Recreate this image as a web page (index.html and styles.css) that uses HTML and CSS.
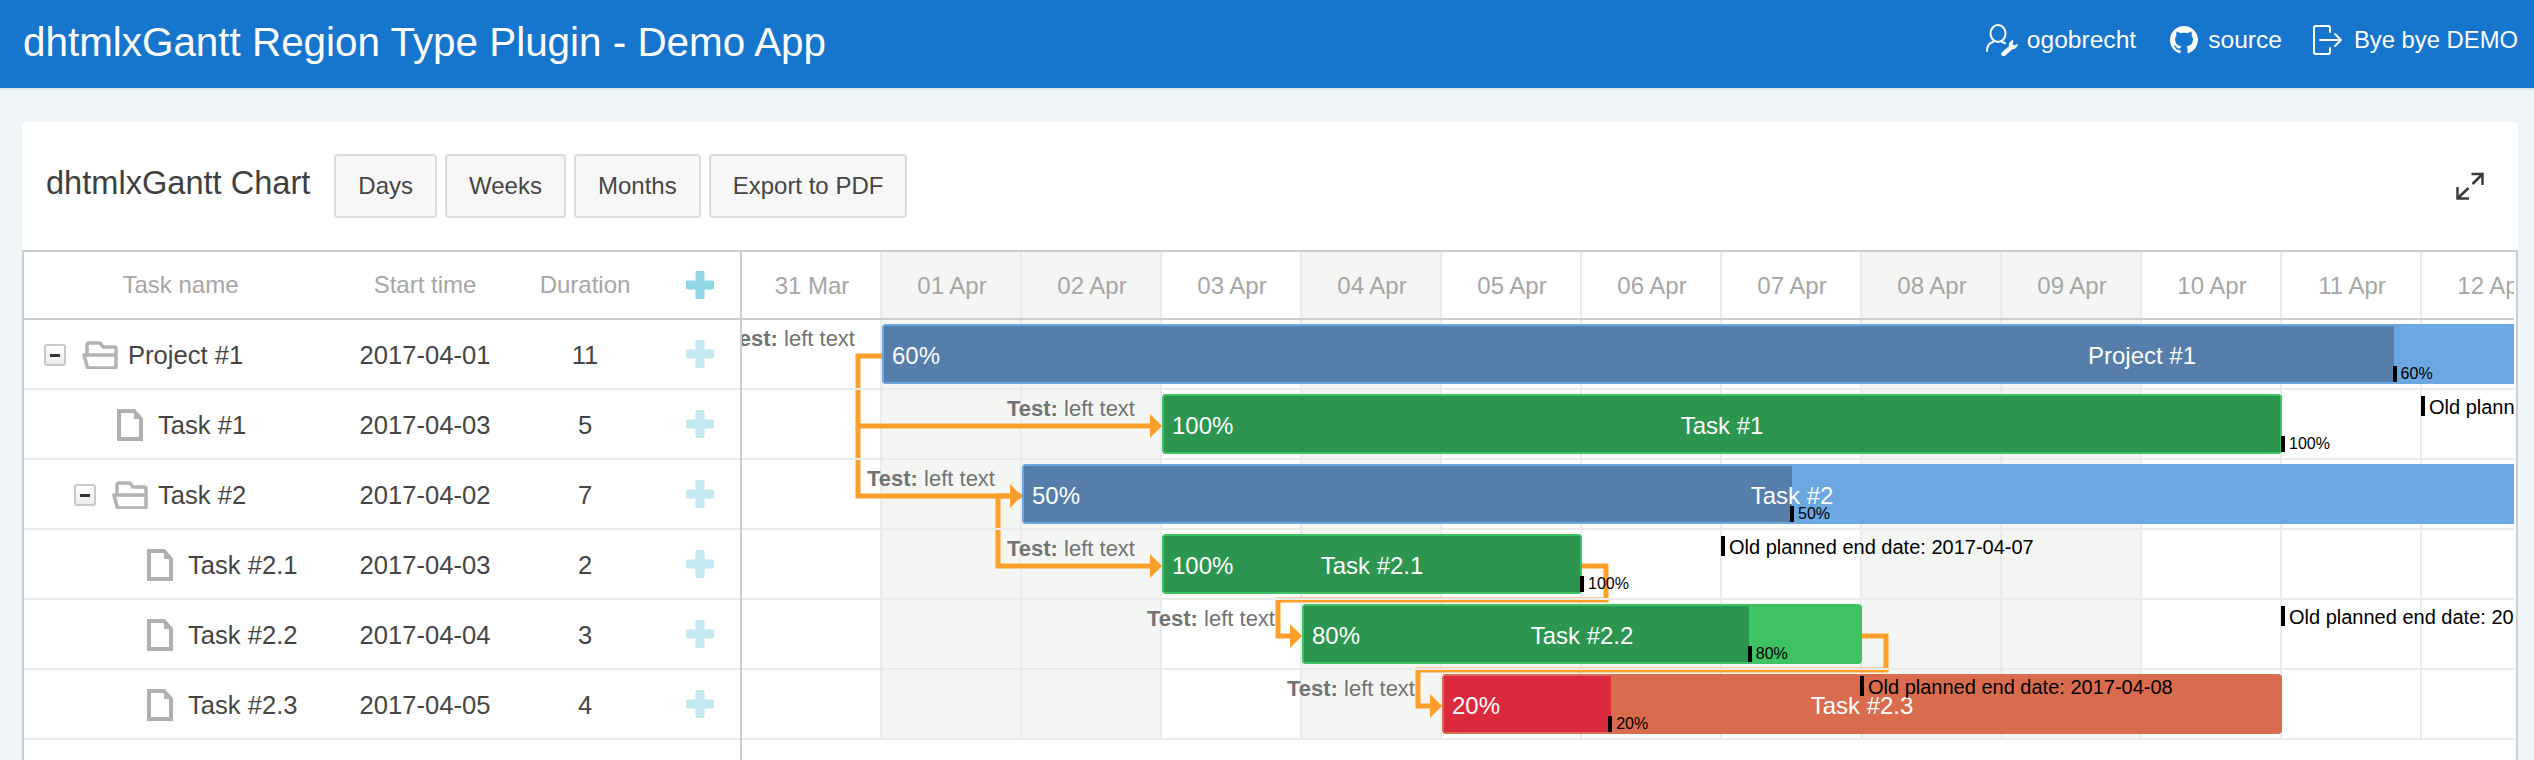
FILE: index.html
```html
<!DOCTYPE html>
<html lang="en">
<head>
  <meta charset="UTF-8">
  <meta name="viewport" content="width=device-width, initial-scale=1.0">
  <title>dhtmlxGantt Region Type Plugin - Demo App</title>

  <link rel="stylesheet" href="styles.css">
</head>
<body>

  <header class="topbar">
    <h1 class="app-title">dhtmlxGantt Region Type Plugin - Demo App</h1>
    <nav class="top-nav">
      <a class="nav-item nav-user">
        <svg class="icon-user" viewBox="0 0 32 32" fill="none" stroke="#fff" stroke-width="2" stroke-linecap="round">
          <ellipse cx="12" cy="9.500" rx="7.500" ry="8.500"/>
          <path d="M1 27c0-5 2-8 6-9M16 18c1 .3 2 .6 3 1.200"/>
          <path d="M17.500 30l8-7" stroke-width="4.500"/>
          <path d="M23.500 22c-.8-2.500.5-4.500 3.500-5.500l-1 3.500 2 2 3.500-1.500c-.5 3-3.500 5-6 4z" fill="#fff" stroke-width="1"/>
        </svg>
        ogobrecht
      </a>
      <a class="nav-item nav-source">
        <svg class="icon-github" viewBox="0 0 16 16" fill="#fff">
          <path d="M8 0C3.58 0 0 3.58 0 8c0 3.54 2.29 6.53 5.47 7.59.4.07.55-.17.55-.38 0-.19-.01-.82-.01-1.49-2.01.37-2.53-.49-2.69-.94-.09-.23-.48-.94-.82-1.13-.28-.15-.68-.52-.01-.53.63-.01 1.08.58 1.23.82.72 1.21 1.87.87 2.33.66.07-.52.28-.87.51-1.07-1.78-.2-3.64-.89-3.64-3.95 0-.87.31-1.59.82-2.15-.08-.2-.36-1.02.08-2.12 0 0 .67-.21 2.2.82.64-.18 1.32-.27 2-.27.68 0 1.36.09 2 .27 1.53-1.04 2.2-.82 2.2-.82.44 1.1.16 1.92.08 2.12.51.56.82 1.27.82 2.15 0 3.07-1.87 3.75-3.65 3.95.29.25.54.73.54 1.48 0 1.07-.01 1.93-.01 2.2 0 .21.15.46.55.38A8.013 8.013 0 0016 8c0-4.42-3.58-8-8-8z"/>
        </svg>
        source
      </a>
      <a class="nav-item nav-logout">
        <svg class="icon-logout" viewBox="0 0 29 30" fill="none" stroke="#fff" stroke-width="2" stroke-linecap="round" stroke-linejoin="round">
          <path d="M17 7V3a2 2 0 0 0-2-2H3a2 2 0 0 0-2 2v24a2 2 0 0 0 2 2h12a2 2 0 0 0 2-2v-4"/>
          <path d="M7 15h21M22 9l6 6-6 6"/>
        </svg>
        Bye bye DEMO
      </a>
    </nav>
  </header>

  <main class="content">
    <section class="card">
      <div class="toolbar">
        <h2 class="chart-title">dhtmlxGantt Chart</h2>
        <button class="btn">Days</button>
        <button class="btn">Weeks</button>
        <button class="btn">Months</button>
        <button class="btn">Export to PDF</button>
        <svg class="icon-expand" viewBox="0 0 28 28" fill="none" stroke="#3c3c3c" stroke-width="2.500">
          <path d="M15.500 2H26.500V13M26 2.500L16.500 12"/>
          <path d="M1.500 15V26.500H13M2 26L12.500 16"/>
        </svg>
      </div>

      <div class="gantt">
        <!-- left side: the task tree -->
        <div class="grid">
          <div class="grid-head">
            <div class="col-name">Task name</div>
            <div class="col-start">Start time</div>
            <div class="col-dur">Duration</div>
            <div class="col-add">
              <svg class="icon-plus" viewBox="0 0 28 28"><path d="M14 2v24M2 14h24"/></svg>
            </div>
          </div>

          <div class="grid-row">
            <div class="col-name tree">
              <span class="toggle"></span>
              <span class="tree-icon">
                <svg class="icon-folder" viewBox="0 0 36 28" fill="none">
                  <path d="M5 13V4a2 2 0 0 1 2-2h11l3 4h11a2 2 0 0 1 2 2v18a1 1 0 0 1-1 1H7a2 2 0 0 1-2-2L2 14h32"/>
                </svg>
              </span>
              <span class="task-name">Project #1</span>
            </div>
            <div class="col-start">2017-04-01</div>
            <div class="col-dur">11</div>
            <div class="col-add"><svg class="icon-plus" viewBox="0 0 28 28"><path d="M14 2v24M2 14h24"/></svg></div>
          </div>

          <div class="grid-row">
            <div class="col-name tree">
              <span class="indent"></span>
              <span class="toggle-space"></span>
              <span class="tree-icon">
                <svg class="icon-doc" viewBox="0 0 26 32" fill="none">
                  <path d="M2 2h15l7 8v20H2z"/><path class="doc-fold" d="M17 2l7 8h-7z"/>
                </svg>
              </span>
              <span class="task-name">Task #1</span>
            </div>
            <div class="col-start">2017-04-03</div>
            <div class="col-dur">5</div>
            <div class="col-add"><svg class="icon-plus" viewBox="0 0 28 28"><path d="M14 2v24M2 14h24"/></svg></div>
          </div>

          <div class="grid-row">
            <div class="col-name tree">
              <span class="indent"></span>
              <span class="toggle"></span>
              <span class="tree-icon">
                <svg class="icon-folder" viewBox="0 0 36 28" fill="none">
                  <path d="M5 13V4a2 2 0 0 1 2-2h11l3 4h11a2 2 0 0 1 2 2v18a1 1 0 0 1-1 1H7a2 2 0 0 1-2-2L2 14h32"/>
                </svg>
              </span>
              <span class="task-name">Task #2</span>
            </div>
            <div class="col-start">2017-04-02</div>
            <div class="col-dur">7</div>
            <div class="col-add"><svg class="icon-plus" viewBox="0 0 28 28"><path d="M14 2v24M2 14h24"/></svg></div>
          </div>

          <div class="grid-row">
            <div class="col-name tree">
              <span class="indent"></span><span class="indent"></span>
              <span class="toggle-space"></span>
              <span class="tree-icon">
                <svg class="icon-doc" viewBox="0 0 26 32" fill="none">
                  <path d="M2 2h15l7 8v20H2z"/><path class="doc-fold" d="M17 2l7 8h-7z"/>
                </svg>
              </span>
              <span class="task-name">Task #2.1</span>
            </div>
            <div class="col-start">2017-04-03</div>
            <div class="col-dur">2</div>
            <div class="col-add"><svg class="icon-plus" viewBox="0 0 28 28"><path d="M14 2v24M2 14h24"/></svg></div>
          </div>

          <div class="grid-row">
            <div class="col-name tree">
              <span class="indent"></span><span class="indent"></span>
              <span class="toggle-space"></span>
              <span class="tree-icon">
                <svg class="icon-doc" viewBox="0 0 26 32" fill="none">
                  <path d="M2 2h15l7 8v20H2z"/><path class="doc-fold" d="M17 2l7 8h-7z"/>
                </svg>
              </span>
              <span class="task-name">Task #2.2</span>
            </div>
            <div class="col-start">2017-04-04</div>
            <div class="col-dur">3</div>
            <div class="col-add"><svg class="icon-plus" viewBox="0 0 28 28"><path d="M14 2v24M2 14h24"/></svg></div>
          </div>

          <div class="grid-row">
            <div class="col-name tree">
              <span class="indent"></span><span class="indent"></span>
              <span class="toggle-space"></span>
              <span class="tree-icon">
                <svg class="icon-doc" viewBox="0 0 26 32" fill="none">
                  <path d="M2 2h15l7 8v20H2z"/><path class="doc-fold" d="M17 2l7 8h-7z"/>
                </svg>
              </span>
              <span class="task-name">Task #2.3</span>
            </div>
            <div class="col-start">2017-04-05</div>
            <div class="col-dur">4</div>
            <div class="col-add"><svg class="icon-plus" viewBox="0 0 28 28"><path d="M14 2v24M2 14h24"/></svg></div>
          </div>
        </div>

        <!-- right side: the timeline -->
        <div class="chart">
          <div class="days">
            <div class="day"><div class="day-label">31 Mar</div></div>
            <div class="day weekend"><div class="day-label">01 Apr</div></div>
            <div class="day weekend"><div class="day-label">02 Apr</div></div>
            <div class="day"><div class="day-label">03 Apr</div></div>
            <div class="day weekend"><div class="day-label">04 Apr</div></div>
            <div class="day"><div class="day-label">05 Apr</div></div>
            <div class="day"><div class="day-label">06 Apr</div></div>
            <div class="day"><div class="day-label">07 Apr</div></div>
            <div class="day weekend"><div class="day-label">08 Apr</div></div>
            <div class="day weekend"><div class="day-label">09 Apr</div></div>
            <div class="day"><div class="day-label">10 Apr</div></div>
            <div class="day"><div class="day-label">11 Apr</div></div>
            <div class="day"><div class="day-label">12 Apr</div></div>
          </div>

          <!-- links use page coordinates, hence the viewBox -->
          <svg class="links" viewBox="742 252 1772 508">
            <path d="M882 356H858V426H1152"/>
            <polygon points="1162,426 1150,414 1150,438"/>
            <path d="M858 426V496H1012"/>
            <polygon points="1022,496 1010,484 1010,508"/>
            <path d="M1022 496H998V566H1152"/>
            <polygon points="1162,566 1150,554 1150,578"/>
            <path d="M1582 566H1606V600H1278V636H1292"/>
            <polygon points="1302,636 1290,624 1290,648"/>
            <path d="M1862 636H1886V670H1418V706H1432"/>
            <polygon points="1442,706 1430,694 1430,718"/>
          </svg>

          <div class="rows">
            <div class="row">
              <div class="bar bar-project" style="left: 140px; width: 2520px;">
                <div class="bar-fill" style="width: 60%;"></div>
                <span class="bar-left"><b>Test:</b> left text</span>
                <span class="bar-pct">60%</span>
                <span class="bar-text">Project #1</span>
                <span class="bar-done" style="left: calc(60% - 1px);">60%</span>
              </div>
            </div>
            <div class="row">
              <div class="bar bar-task" style="left: 420px; width: 1120px;">
                <div class="bar-fill" style="width: 100%;"></div>
                <span class="bar-left"><b>Test:</b> left text</span>
                <span class="bar-pct">100%</span>
                <span class="bar-text">Task #1</span>
                <span class="bar-done" style="left: calc(100% + 1px);">100%</span>
              </div>
              <span class="old-plan" style="left: 1679px;">Old planned end date: 2017-04-11</span>
            </div>
            <div class="row">
              <div class="bar bar-project" style="left: 280px; width: 1540px;">
                <div class="bar-fill" style="width: 50%;"></div>
                <span class="bar-left"><b>Test:</b> left text</span>
                <span class="bar-pct">50%</span>
                <span class="bar-text">Task #2</span>
                <span class="bar-done" style="left: calc(50% - 2px);">50%</span>
              </div>
            </div>
            <div class="row">
              <div class="bar bar-task" style="left: 420px; width: 420px;">
                <div class="bar-fill" style="width: 100%;"></div>
                <span class="bar-left"><b>Test:</b> left text</span>
                <span class="bar-pct">100%</span>
                <span class="bar-text">Task #2.1</span>
                <span class="bar-done" style="left: 100%;">100%</span>
              </div>
              <span class="old-plan" style="left: 979px;">Old planned end date: 2017-04-07</span>
            </div>
            <div class="row">
              <div class="bar bar-task" style="left: 560px; width: 560px;">
                <div class="bar-fill" style="width: 80%;"></div>
                <span class="bar-left"><b>Test:</b> left text</span>
                <span class="bar-pct">80%</span>
                <span class="bar-text">Task #2.2</span>
                <span class="bar-done" style="left: calc(80% - 1px);">80%</span>
              </div>
              <span class="old-plan" style="left: 1539px;">Old planned end date: 2017-04-10</span>
            </div>
            <div class="row">
              <div class="bar bar-late" style="left: 700px; width: 840px;">
                <div class="bar-fill" style="width: 20%;"></div>
                <span class="bar-left"><b>Test:</b> left text</span>
                <span class="bar-pct">20%</span>
                <span class="bar-text">Task #2.3</span>
                <span class="bar-done" style="left: calc(20% - 3px);">20%</span>
              </div>
              <span class="old-plan" style="left: 1118px;">Old planned end date: 2017-04-08</span>
            </div>
          </div>
        </div>
      </div>
    </section>
  </main>

</body>
</html>
```

FILE: styles.css
```css
html, body {
  height: 100%;
}

body {
  font-family: "Liberation Sans", Arial, sans-serif;
  margin: 0;
  padding: 0;
  background-color: #f0f5f9;
  color: #454545;
  display: flex;
  flex-direction: column;
  overflow: hidden;
}

/* top bar */
.topbar {
  background-color: #1675cc;
  color: white;
  height: 88px;
  border-bottom: 2px solid #dbe5ec;
  display: flex;
  align-items: center;
  justify-content: space-between;
  padding: 0 16px 0 23px;
  flex: none;
}

.app-title {
  font-size: 40.4px;
  font-weight: normal;
  margin: 0 0 4px;
}

.top-nav {
  display: flex;
  align-items: center;
  gap: 34px;
  font-size: 24.6px;
  margin-bottom: 8px;
}

.nav-item {
  display: flex;
  align-items: center;
  gap: 9px;
}

.nav-source {
  gap: 10px;
}

.nav-logout {
  gap: 12px;
  margin-left: -3px;
  font-size: 23.8px;
}

.icon-user {
  width: 32px;
  height: 32px;
}

.icon-github {
  width: 28px;
  height: 28px;
}

.icon-logout {
  width: 29px;
  height: 30px;
}

/* card */
.content {
  flex: 1;
  display: flex;
  padding: 32px 16px 0 22px;
  min-height: 0;
}

.card {
  flex: 1;
  background-color: white;
  border-radius: 4px 4px 0 0;
  display: flex;
  flex-direction: column;
  min-width: 0;
}

.toolbar {
  height: 128px;
  flex: none;
  display: flex;
  align-items: center;
  gap: 8px;
  padding: 0 34px 0 24px;
}

.chart-title {
  font-size: 32.6px;
  font-weight: normal;
  margin: 0 16px 6px 0;
  color: #3f3f3f;
}

.btn {
  height: 64px;
  padding: 0 22px;
  font-family: inherit;
  font-size: 24px;
  color: #454545;
  background-color: #f7f7f7;
  border: 2px solid #dcdcdc;
  border-radius: 4px;
}

.icon-expand {
  width: 28px;
  height: 28px;
  margin-left: auto;
}

/* gantt */
.gantt {
  flex: 1;
  min-height: 0;
  display: flex;
  border: 2px solid #cecece;
  border-bottom: none;
}

.grid {
  width: 716px;
  flex: none;
  border-right: 2px solid #cecece;
}

.grid-head,
.grid-row {
  display: flex;
  align-items: center;
  text-align: center;
}

.grid-head {
  height: 66px;
  border-bottom: 2px solid #cecece;
  font-size: 24px;
  color: #a6a6a6;
}

.grid-head .col-name {
  padding-right: 3px;
  box-sizing: border-box;
}

.grid-row {
  height: 66px;
  padding-top: 2px;
  border-bottom: 2px solid #ebebeb;
  font-size: 25.6px;
}

.grid-row .col-add {
  margin-top: -2px;
}

.col-name {
  width: 316px;
}

.col-start {
  width: 170px;
}

.col-dur {
  width: 150px;
}

.col-add {
  width: 80px;
  display: flex;
  justify-content: center;
}

.icon-plus {
  width: 28px;
  height: 28px;
  stroke: #c5e9f1;
  stroke-width: 9;
  stroke-linecap: round;
}

.grid-head .icon-plus {
  stroke: #8fd6e6;
}

.tree {
  display: flex;
  align-items: center;
  padding-left: 20px;
  box-sizing: border-box;
}

.indent {
  width: 30px;
  flex: none;
}

.toggle,
.toggle-space {
  width: 22px;
  height: 22px;
  margin-right: 16px;
  flex: none;
  box-sizing: border-box;
}

.toggle {
  border: 2px solid #c8c8c8;
  border-radius: 3px;
  background: linear-gradient(#fff, #ececec);
  display: flex;
  align-items: center;
  justify-content: center;
}

.toggle::before {
  content: "";
  width: 10px;
  height: 3px;
  background-color: #333;
}

.tree-icon {
  width: 36px;
  flex: none;
  display: flex;
  justify-content: center;
  margin-right: 10px;
}

.icon-folder {
  width: 36px;
  height: 28px;
  stroke: #b3b3b3;
  stroke-width: 3.5;
  stroke-linejoin: round;
}

.icon-doc {
  width: 26px;
  height: 32px;
  stroke: #b0b0b0;
  stroke-width: 4;
}

.doc-fold {
  fill: #b0b0b0;
  stroke: none;
}

/* timeline */
.chart {
  flex: 1;
  min-width: 0;
  margin-right: 2px;
  position: relative;
  overflow: hidden;
}

.days {
  display: flex;
  height: 488px;
}

.day {
  width: 140px;
  flex: none;
  box-sizing: border-box;
  border-right: 2px solid #ebebeb;
}

.weekend {
  background-color: #f4f6f4;
}

.day-label {
  height: 64px;
  padding-top: 2px;
  margin-right: -2px;
  border-bottom: 2px solid #cecece;
  display: flex;
  align-items: center;
  justify-content: center;
  font-size: 24px;
  color: #a6a6a6;
}

.links {
  position: absolute;
  left: 0;
  top: 0;
  width: 1772px;
  height: 508px;
}

.links path {
  fill: none;
  stroke: #ff9f2b;
  stroke-width: 5;
}

.links polygon {
  fill: #ff9f2b;
}

.rows {
  position: absolute;
  left: 0;
  top: 68px;
  width: 100%;
}

.row {
  height: 68px;
  border-bottom: 2px solid #ebebeb;
  position: relative;
}

.bar {
  position: absolute;
  top: 4px;
  height: 60px;
  box-sizing: border-box;
  border: 2px solid;
  border-radius: 4px;
  color: white;
  font-size: 24px;
  line-height: 59px;
  text-align: center;
}

.bar-project {
  background-color: #6ba7e0;
  border-color: #6ba7e0;
}

.bar-project .bar-fill {
  background-color: #557eaa;
}

.bar-task {
  background-color: #3ec264;
  border-color: #3ec264;
}

.bar-task .bar-fill {
  background-color: #2c9650;
}

.bar-late {
  background-color: #d96c4f;
  border-color: #d96c4f;
}

.bar-late .bar-fill {
  background-color: #db2a3c;
}

.bar-fill {
  position: absolute;
  left: 0;
  top: 0;
  bottom: 0;
}

.bar-text {
  position: relative;
}

.bar-pct {
  position: absolute;
  left: 8px;
  top: 0;
}

.bar-left {
  position: absolute;
  right: 100%;
  top: -2px;
  margin-right: 29px;
  font-size: 22px;
  line-height: 30px;
  color: #737373;
  white-space: nowrap;
}

.bar-done {
  position: absolute;
  top: 40px;
  border-left: 4px solid #000;
  padding-left: 4px;
  font-size: 16px;
  line-height: 16px;
  color: #000;
  white-space: nowrap;
}

.old-plan {
  position: absolute;
  top: 6px;
  height: 20px;
  box-sizing: border-box;
  padding-top: 1px;
  border-left: 4px solid #000;
  padding-left: 4px;
  font-size: 20px;
  line-height: 20px;
  color: #000;
  white-space: nowrap;
}
```
